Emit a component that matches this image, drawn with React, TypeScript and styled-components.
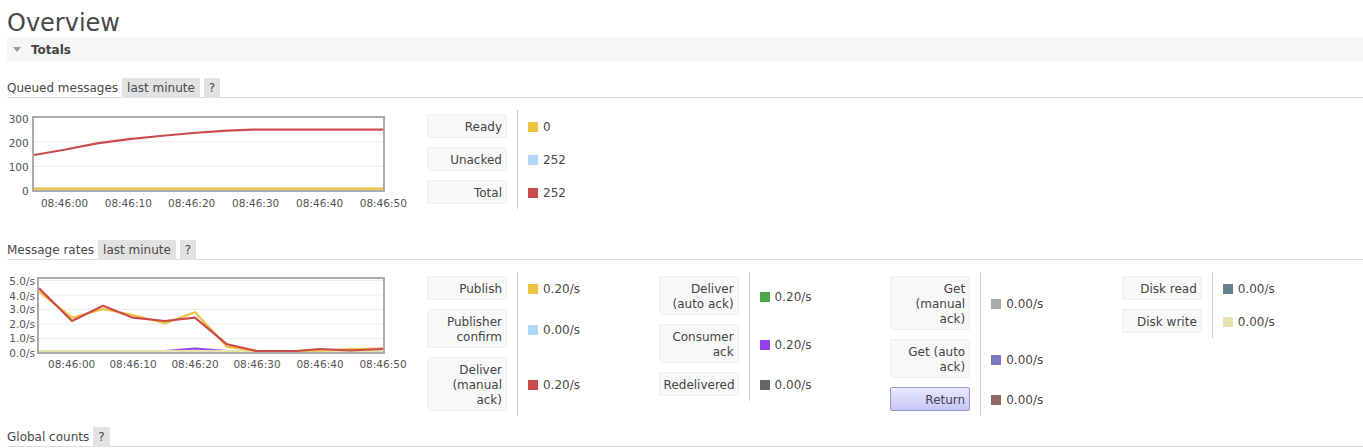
import React from "react";
import styled, { createGlobalStyle } from "styled-components";

/******************************************************
 *********************** Style *************************
 ******************************************************/

const GlobalStyle = createGlobalStyle`
  html, body {
    margin: 0;
    padding: 0;
    background: #fff;
  }
  body {
    font-family: "DejaVu Sans", Verdana, sans-serif;
    font-size: 12px;
    color: #484848;
  }
`;

const Page = styled.div`
  padding-left: 7px;
`;

const Title = styled.h1`
  margin: 10px 0 0;
  font-size: 24px;
  line-height: 27px;
  font-weight: normal;
  color: #484848;
`;

const TotalsBar = styled.div`
  display: flex;
  align-items: center;
  height: 25px;
  padding-left: 6px;
  background: #f6f6f6;
  font-weight: bold;
  color: #444;
`;

const Caret = styled.span`
  width: 0;
  height: 0;
  margin-right: 10px;
  border-left: 4.5px solid transparent;
  border-right: 4.5px solid transparent;
  border-top: 5px solid #9a9a9a;
`;

const Heading = styled.div<{ $top: number }>`
  display: flex;
  align-items: center;
  gap: 4px;
  height: 19px;
  margin-top: ${({ $top }) => $top}px;
  border-bottom: 1px solid #dddddd;
  line-height: 20px;
`;

const Badge = styled.span`
  padding: 0 5px;
  background: #e2e2e2;
`;

const Content = styled.div`
  display: flex;
  align-items: flex-start;
  margin-top: 12px;
`;

const ChartBox = styled.div`
  flex: none;
  width: 420px;
  height: 119px;

  svg {
    display: block;
    font-family: "DejaVu Sans", Verdana, sans-serif;
    font-size: 10.5px;
  }
`;

const Column = styled.div`
  flex: none;
  display: grid;
  grid-template-columns: 90px 1fr;
  width: 231.6px;
`;

const LabelCell = styled.div`
  padding: 4px 10px 5px 0;
`;

const Label = styled.div<{ $active?: boolean }>`
  box-sizing: border-box;
  width: 80px;
  padding: 5px 4px 2px;
  line-height: 15px;
  text-align: right;
  border-radius: 2px;
  border: 1px solid ${({ $active }) => ($active ? "#9595dc" : "#eeeeee")};
  background: ${({ $active }) =>
    $active ? "linear-gradient(to bottom, #e9e9ff, #c6c6f7)" : "#f8f8f8"};
  color: #444;
`;

const ValueCell = styled.div`
  display: flex;
  align-items: center;
  gap: 5px;
  padding: 1px 0 0 10px;
  border-left: 1px solid #cccccc;
`;

const Swatch = styled.span<{ $color: string }>`
  width: 10px;
  height: 10px;
  background: ${({ $color }) => $color};
`;

/******************************************************
 ************************* Data ************************
 ******************************************************/

type Row = { label: string; value: string; color: string; active?: boolean };

const queued: Row[] = [
  { label: "Ready", value: "0", color: "#edc240" },
  { label: "Unacked", value: "252", color: "#afd8f8" },
  { label: "Total", value: "252", color: "#cb4b4b" },
];

const rates: Row[][] = [
  [
    { label: "Publish", value: "0.20/s", color: "#edc240" },
    { label: "Publisher confirm", value: "0.00/s", color: "#afd8f8" },
    { label: "Deliver (manual ack)", value: "0.20/s", color: "#cb4b4b" },
  ],
  [
    { label: "Deliver (auto ack)", value: "0.20/s", color: "#4da74d" },
    { label: "Consumer ack", value: "0.20/s", color: "#9440ed" },
    { label: "Redelivered", value: "0.00/s", color: "#666666" },
  ],
  [
    { label: "Get (manual ack)", value: "0.00/s", color: "#aaaaaa" },
    { label: "Get (auto ack)", value: "0.00/s", color: "#7c79c3" },
    { label: "Return", value: "0.00/s", color: "#8e6767", active: true },
  ],
  [
    { label: "Disk read", value: "0.00/s", color: "#67808e" },
    { label: "Disk write", value: "0.00/s", color: "#e5e4ae" },
  ],
];

const pts = (list: number[][]) => list.map(([x, y]) => `${x},${y}`).join(" ");

const AXIS = "#545454";

/******************************************************
 ************************* Dom *************************
 ******************************************************/

const Legend: React.FC<{ rows: Row[] }> = ({ rows }) => (
  <Column>
    {rows.map((r) => (
      <React.Fragment key={r.label}>
        <LabelCell>
          <Label $active={r.active}>{r.label}</Label>
        </LabelCell>
        <ValueCell>
          <Swatch $color={r.color} />
          {r.value}
        </ValueCell>
      </React.Fragment>
    ))}
  </Column>
);

const QueuedChart = () => {
  const xs = [57.5, 121.3, 184.7, 248.7, 312.7, 376.3];
  const times = ["08:46:00", "08:46:10", "08:46:20", "08:46:30", "08:46:40", "08:46:50"];
  const ys: [string, number][] = [
    ["300", 13],
    ["200", 36.7],
    ["100", 60.7],
    ["0", 85],
  ];
  return (
    <svg width={420} height={119}>
      <line x1={26} x2={377} y1={31.7} y2={31.7} stroke="#ececec" />
      <line x1={26} x2={377} y1={56.3} y2={56.3} stroke="#ececec" />
      <polyline
        points={pts([[27, 78.6], [376, 78.6]])}
        fill="none"
        stroke="#edc240"
        strokeWidth={2.2}
      />
      <polyline
        points={pts([
          [27, 45], [56, 40], [90, 33.3], [120, 29.3], [153, 26],
          [186, 23], [220, 20.7], [246, 19.7], [376, 19.7],
        ])}
        fill="none"
        stroke="#cb4b4b"
        strokeWidth={2.2}
        strokeLinejoin="round"
      />
      <rect x={26} y={7} width={351} height={74} fill="none" stroke="#aaaaaa" strokeWidth={2} />
      {ys.map(([t, y]) => (
        <text key={t} x={21.7} y={y} textAnchor="end" fill={AXIS}>
          {t}
        </text>
      ))}
      {times.map((t, i) => (
        <text key={t} x={xs[i]} y={96.5} textAnchor="middle" fill={AXIS}>
          {t}
        </text>
      ))}
    </svg>
  );
};

const RatesChart = () => {
  const xs = [64.7, 126, 188, 250, 313, 376];
  const times = ["08:46:00", "08:46:10", "08:46:20", "08:46:30", "08:46:40", "08:46:50"];
  const ys: [string, number][] = [
    ["5.0/s", 12.7],
    ["4.0/s", 27.7],
    ["3.0/s", 41],
    ["2.0/s", 56],
    ["1.0/s", 70],
    ["0.0/s", 85],
  ];
  return (
    <svg width={420} height={119}>
      {[8.5, 23, 37.5, 52, 66.5].map((y) => (
        <line key={y} x1={31} x2={377} y1={y} y2={y} stroke="#ececec" />
      ))}
      <polyline
        points={pts([[32, 79], [158, 79], [188, 76.5], [220, 79], [343, 79], [376, 76.5]])}
        fill="none"
        stroke="#9440ed"
        strokeWidth={2}
      />
      <polyline points={pts([[32, 79], [376, 79]])} fill="none" stroke="#e5e4ae" strokeWidth={2.2} />
      <polyline
        points={pts([
          [32, 19.7], [65, 45.7], [96, 37], [126, 43], [158, 51.3], [188, 40.3],
          [220, 74.7], [250, 79], [283, 79], [313, 78.5], [343, 77], [376, 76.5],
        ])}
        fill="none"
        stroke="#edc240"
        strokeWidth={2.2}
        strokeLinejoin="round"
      />
      <polyline
        points={pts([
          [32, 16.3], [65, 49], [96, 33.7], [126, 45.7], [158, 49], [188, 45.7],
          [220, 72.3], [250, 79], [290, 79], [313, 77], [343, 78.5], [376, 77],
        ])}
        fill="none"
        stroke="#cb4b4b"
        strokeWidth={2.2}
        strokeLinejoin="round"
      />
      <rect x={31} y={6} width={346} height={75} fill="none" stroke="#aaaaaa" strokeWidth={2} />
      {ys.map(([t, y]) => (
        <text key={t} x={28} y={y} textAnchor="end" fill={AXIS}>
          {t}
        </text>
      ))}
      {times.map((t, i) => (
        <text key={t} x={xs[i]} y={95.5} textAnchor="middle" fill={AXIS}>
          {t}
        </text>
      ))}
    </svg>
  );
};

const App: React.FC = () => (
  <Page>
    <GlobalStyle />
    <Title>Overview</Title>
    <TotalsBar>
      <Caret />
      Totals
    </TotalsBar>

    <Heading $top={16}>
      Queued messages
      <Badge>last minute</Badge>
      <Badge>?</Badge>
    </Heading>
    <Content>
      <ChartBox>
        <QueuedChart />
      </ChartBox>
      <Legend rows={queued} />
    </Content>

    <Heading $top={11}>
      Message rates
      <Badge>last minute</Badge>
      <Badge>?</Badge>
    </Heading>
    <Content>
      <ChartBox>
        <RatesChart />
      </ChartBox>
      {rates.map((col, i) => (
        <Legend key={i} rows={col} />
      ))}
    </Content>

    <Heading $top={11}>
      Global counts
      <Badge>?</Badge>
    </Heading>
  </Page>
);

export default App;
